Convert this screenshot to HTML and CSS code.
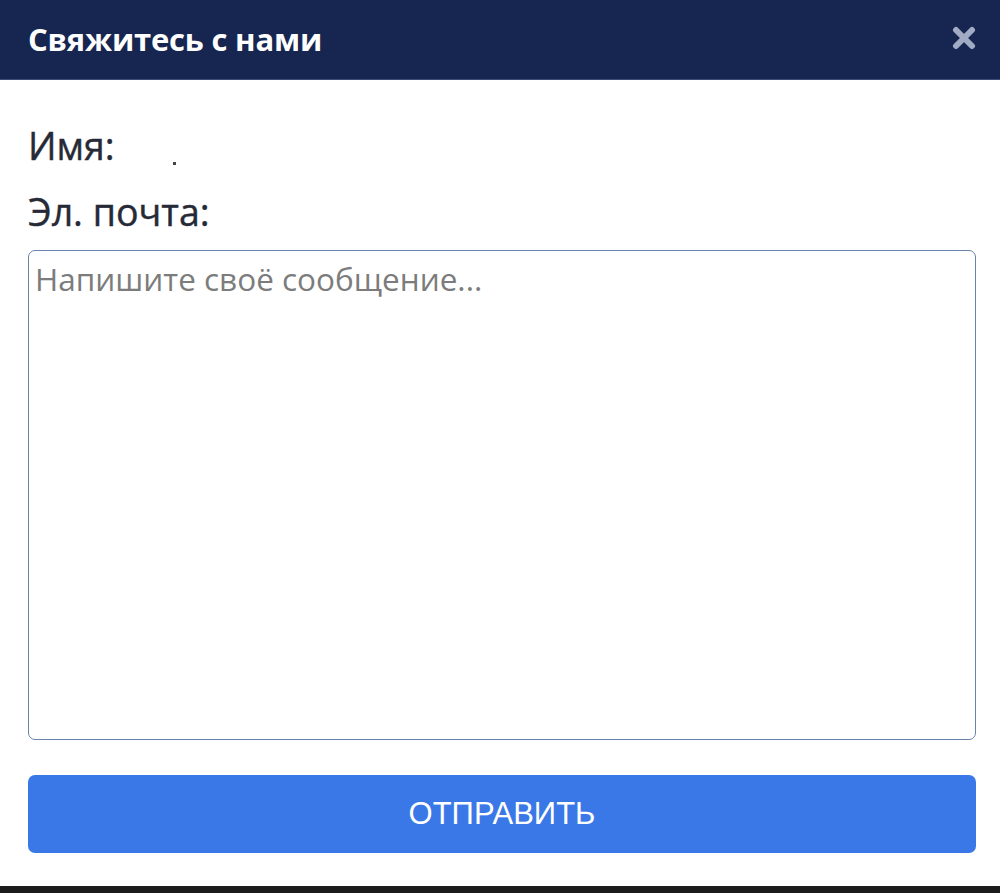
FILE: index.html
```html
<!DOCTYPE html>
<html lang="ru">
<head>
<meta charset="utf-8">
<link rel="stylesheet" href="styles.css">
</head>
<body>
<div class="modal">
  <header class="modal-header">
    <h1 class="modal-title">Свяжитесь с нами</h1>
    <svg class="modal-close" width="24" height="24" viewBox="0 0 24 24" aria-label="close">
      <path d="M4 4 L20 20 M20 4 L4 20" stroke="#a2abc4" stroke-width="6" stroke-linecap="round"/>
    </svg>
  </header>
  <form class="modal-body">
    <div class="field">
      <label class="field-label">Имя:</label>
      <span class="field-dot"></span>
    </div>
    <div class="field">
      <label class="field-label">Эл. почта:</label>
    </div>
    <div class="message-box">Напишите своё сообщение...</div>
    <div class="submit-btn">ОТПРАВИТЬ</div>
  </form>
  <div class="bottom-strip"></div>
</div>
</body>
</html>
```
FILE: styles.css
```css
html, body {
  margin: 0;
  padding: 0;
  background: #ffffff;
}
.modal {
  width: 1000px;
  height: 893px;
  display: flex;
  flex-direction: column;
  font-family: "Open Sans", "Noto Sans", sans-serif;
}
.modal-header {
  height: 80px;
  background: #172551;
  display: flex;
  align-items: center;
  justify-content: space-between;
  padding: 0 24px 0 28px;
  box-sizing: border-box;
  border-bottom: 1px solid #3a4b78;
}
.modal-title {
  margin: 0 0 2px 0;
  color: #ffffff;
  font-size: 31px;
  font-weight: 700;
  letter-spacing: -0.2px;
}
.modal-close {
  display: block;
  margin-bottom: 3px;
}
.modal-body {
  flex: 1;
  display: flex;
  flex-direction: column;
  padding: 32px 24px 0 28px;
}
.field {
  display: flex;
  align-items: center;
  height: 66px;
  position: relative;
}
.field-label {
  font-size: 37.5px;
  font-weight: 500;
  color: #262a36;
  -webkit-text-stroke: 0.4px #262a36;
}
.field-dot {
  position: absolute;
  left: 145px;
  top: 50px;
  width: 3px;
  height: 3px;
  background: #444;
}
.message-box {
  margin-top: 6px;
  height: 490px;
  border: 1.5px solid #6a83ad;
  border-radius: 7px;
  box-sizing: border-box;
  padding: 8px 6px;
  font-size: 31.5px;
  color: #7c7c7c;
  line-height: 40px;
}
.submit-btn {
  margin-top: 35px;
  height: 78px;
  background: #3b78e7;
  border-radius: 7px;
  display: flex;
  align-items: center;
  justify-content: center;
  color: #ffffff;
  font-family: "Liberation Sans", Arial, sans-serif;
  font-size: 31px;
}
.bottom-strip {
  margin-top: auto;
  height: 7px;
  background: #1c1c1c;
}
```
